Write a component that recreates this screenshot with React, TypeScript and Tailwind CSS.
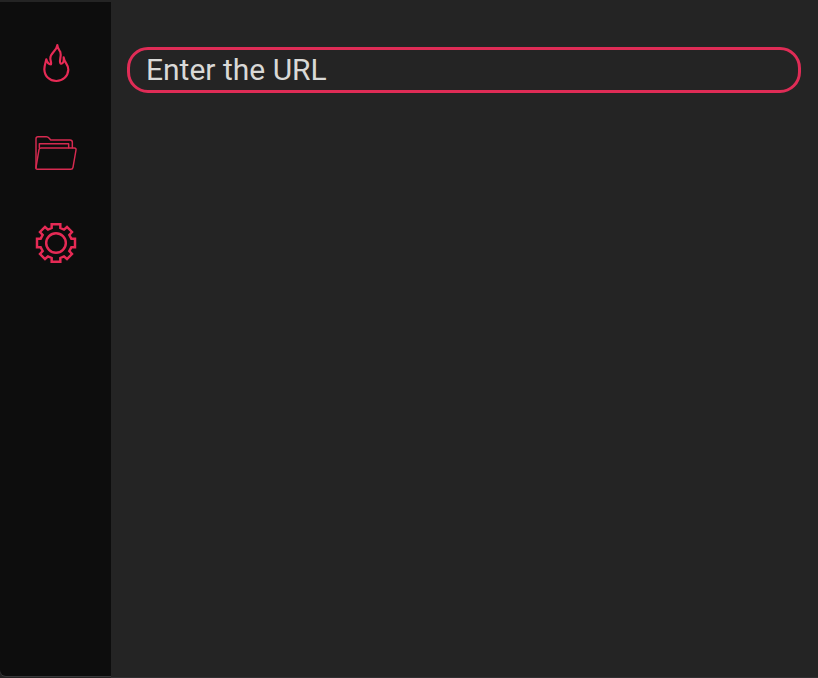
import React from "react";

function FlameIcon() {
  return (
    <svg width="52" height="50" viewBox="0 0 156 150" fill="none" stroke="#e62a55" strokeWidth="6.5" strokeLinejoin="round" strokeLinecap="round">
      <path d="M82 21C80 40 61 43 61 61C61 69 65 74 63 79C56 79 51 73 49 64C47 74 43 82 43 94C44 115 59 129 79 129C99 129 114 115 115 95C116 79 103 75 101 58C102 69 100 78 93 77C84 73 96 56 91 42C87 34 83 32 82 21Z" />
    </svg>
  );
}

function FolderIcon() {
  return (
    <svg width="52" height="46" viewBox="0 0 156 138" fill="none" stroke="#d62a50" strokeWidth="4.4" strokeLinejoin="round" strokeLinecap="round">
      <path d="M18 114V26Q18 20 24 20H49Q54 20 57 24L62 30H120Q127 30 127 37V53" />
      <path d="M28 53V41H116V53" />
      <path d="M33 54H133Q139 54 138 60L129 112Q128 118 122 118H22Q17 118 18 112L27 59Q28 54 33 54Z" />
    </svg>
  );
}

function GearIcon() {
  return (
    <svg width="52" height="50" viewBox="0 0 156 150" fill="none" stroke="#e62a55" strokeWidth="7.4" strokeLinejoin="miter">
      <path d="M65 19H91V30L102 35L111 27L126 42L118 51L124 62H135V88H124L118 99L126 108L111 123L102 115L91 120V131H65V120L54 115L45 123L30 108L38 99L32 88H21V62H32L38 51L30 42L45 27L54 35L65 30Z" />
      <circle cx="78" cy="75" r="29.5" />
    </svg>
  );
}

export default function App() {
  return (
    <div className="h-[678px] w-[818px] overflow-hidden bg-[#242424] pt-[2px] font-[Roboto,sans-serif]">
      <div className="flex h-[676px]">
        <nav className="flex h-[674px] w-[111px] shrink-0 flex-col items-center rounded-bl-[6px] bg-[#0d0d0d] pt-9 shadow-[0_1px_0_#38383a]">
          <button className="h-[50px]" aria-label="Trending"><FlameIcon /></button>
          <button className="mt-[42px] h-[46px]" aria-label="Files"><FolderIcon /></button>
          <button className="mt-[42px] h-[50px]" aria-label="Settings"><GearIcon /></button>
        </nav>
        <main className="flex-1 border-b border-[#303032] pt-[45px] pr-[17px] pl-4">
          <input
            type="text"
            placeholder="Enter the URL"
            className="block h-[46px] w-full rounded-[21px] border-[3px] border-[#df2c56] bg-[#242424] px-4 pb-[2px] text-[30px] leading-9 text-[#d9d9d7] outline-none placeholder:text-[#d9d9d7]"
          />
        </main>
      </div>
    </div>
  );
}
